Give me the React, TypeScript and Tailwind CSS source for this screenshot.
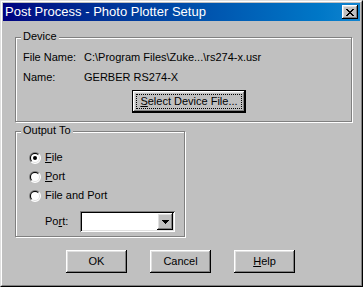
import React from "react";

const font = { fontFamily: '"Liberation Sans", Arial, sans-serif' };

const raised =
  "shadow-[inset_-1px_-1px_0_#000,inset_1px_1px_0_#fff,inset_-2px_-2px_0_#808080,inset_2px_2px_0_#dfdfdf]";

function Radio({ checked }: { checked?: boolean }) {
  return (
    <svg width="12" height="12" viewBox="0 0 12 12" className="shrink-0">
      <path d="M1.757 10.243 A6 6 0 0 1 10.243 1.757 Z" fill="#808080" />
      <path d="M1.757 10.243 A6 6 0 0 0 10.243 1.757 Z" fill="#ffffff" />
      <path d="M2.464 9.536 A5 5 0 0 1 9.536 2.464 Z" fill="#000000" />
      <path d="M2.464 9.536 A5 5 0 0 0 9.536 2.464 Z" fill="#dfdfdf" />
      <circle cx="6" cy="6" r="4" fill="#ffffff" />
      {checked && <circle cx="6" cy="6" r="2" fill="#000000" />}
    </svg>
  );
}

function CloseGlyph() {
  const rows = ["XX....XX", ".XX..XX.", "..XXXX..", "...XX...", "..XXXX..", ".XX..XX.", "XX....XX"];
  return (
    <svg width="8" height="7" viewBox="0 0 8 7" shapeRendering="crispEdges">
      {rows.map((r, y) =>
        r.split("").map((c, x) =>
          c === "X" ? <rect key={`${x}-${y}`} x={x} y={y} width="1" height="1" fill="#000" /> : null
        )
      )}
    </svg>
  );
}

function Group({ label, className, children }: { label: string; className: string; children: React.ReactNode }) {
  return (
    <div className={`relative border border-[#808080] shadow-[inset_1px_1px_0_#fff,1px_1px_0_#fff] ${className}`}>
      <span className="absolute left-[5px] top-[-8px] bg-[#c0c0c0] px-[2px] leading-[13px]">{label}</span>
      {children}
    </div>
  );
}

function Btn({ children }: { children: React.ReactNode }) {
  return (
    <div className={`w-[61px] h-[23px] flex items-center justify-center bg-[#c0c0c0] ${raised}`}>
      <span className="leading-[13px]">{children}</span>
    </div>
  );
}

export default function App() {
  return (
    <div className="w-[363px] h-[287px] text-[11px] text-black" style={font}>
      <div className="w-full h-full border border-t-[#dfdfdf] border-l-[#dfdfdf] border-r-black border-b-black">
        <div className="w-full h-full border border-t-white border-l-white border-r-[#808080] border-b-[#808080] p-px bg-[#c0c0c0] flex flex-col">
          {/* title bar */}
          <div className="h-[18px] shrink-0 flex items-center justify-between bg-gradient-to-r from-[#000080] to-[#1084d0] pl-[2px] pr-[2px]">
            <span className="text-white text-[13px] leading-[16px]">Post Process - Photo Plotter Setup</span>
            <div className={`w-[16px] h-[14px] flex items-center justify-center bg-[#c0c0c0] ${raised}`}>
              <CloseGlyph />
            </div>
          </div>

          {/* content */}
          <div className="flex flex-col pl-[12px]">
            <Group label="Device" className="mt-[16px] w-[337px] h-[85px]">
              <div className="flex flex-col pt-[9px] pl-[7px]">
                <div className="h-[20px] flex items-center">
                  <span className="w-[61px]">File Name:</span>
                  <span>C:\Program Files\Zuke...\rs274-x.usr</span>
                </div>
                <div className="h-[20px] flex items-center">
                  <span className="w-[61px]">Name:</span>
                  <span>GERBER RS274-X</span>
                </div>
                <div className="mt-[3px] ml-[109px] w-[114px] h-[23px] border border-black bg-[#c0c0c0] shadow-[inset_-1px_-1px_0_#000,inset_1px_1px_0_#fff,inset_-2px_-2px_0_#808080,inset_2px_2px_0_#dfdfdf] p-[3px]">
                  <div className="w-full h-full border border-dotted border-black flex items-center justify-center">
                    <span className="leading-[13px]">
                      <u>S</u>elect Device File...
                    </span>
                  </div>
                </div>
              </div>
            </Group>

            <Group label="Output To" className="mt-[9px] w-[170px] h-[106px]">
              <div className="flex flex-col pt-[16px] pl-[13px]">
                <div className="h-[19px] flex items-center gap-[4px]">
                  <Radio checked />
                  <span className="leading-[13px]">
                    <u>F</u>ile
                  </span>
                </div>
                <div className="h-[19px] flex items-center gap-[4px]">
                  <Radio />
                  <span className="leading-[13px]">
                    <u>P</u>ort
                  </span>
                </div>
                <div className="h-[19px] flex items-center gap-[4px]">
                  <Radio />
                  <span className="leading-[13px]">File and Port</span>
                </div>
                <div className="mt-[6px] flex items-center pl-[16px]">
                  <span className="w-[35px] leading-[13px]">
                    Po<u>r</u>t:
                  </span>
                  <div className="w-[95px] h-[21px] p-[2px] flex shadow-[inset_1px_1px_0_#808080,inset_-1px_-1px_0_#fff,inset_2px_2px_0_#000,inset_-2px_-2px_0_#dfdfdf]">
                    <div className="flex-1 bg-white" />
                    <div className={`w-[16px] h-full bg-[#c0c0c0] flex items-center justify-center ${raised}`}>
                      <svg width="7" height="4" viewBox="0 0 7 4" shapeRendering="crispEdges">
                        <rect x="0" y="0" width="7" height="1" fill="#000" />
                        <rect x="1" y="1" width="5" height="1" fill="#000" />
                        <rect x="2" y="2" width="3" height="1" fill="#000" />
                        <rect x="3" y="3" width="1" height="1" fill="#000" />
                      </svg>
                    </div>
                  </div>
                </div>
              </div>
            </Group>

            <div className="mt-[13px] ml-[51px] flex gap-[23px]">
              <Btn>OK</Btn>
              <Btn>Cancel</Btn>
              <Btn>
                <u>H</u>elp
              </Btn>
            </div>
          </div>
        </div>
      </div>
    </div>
  );
}
